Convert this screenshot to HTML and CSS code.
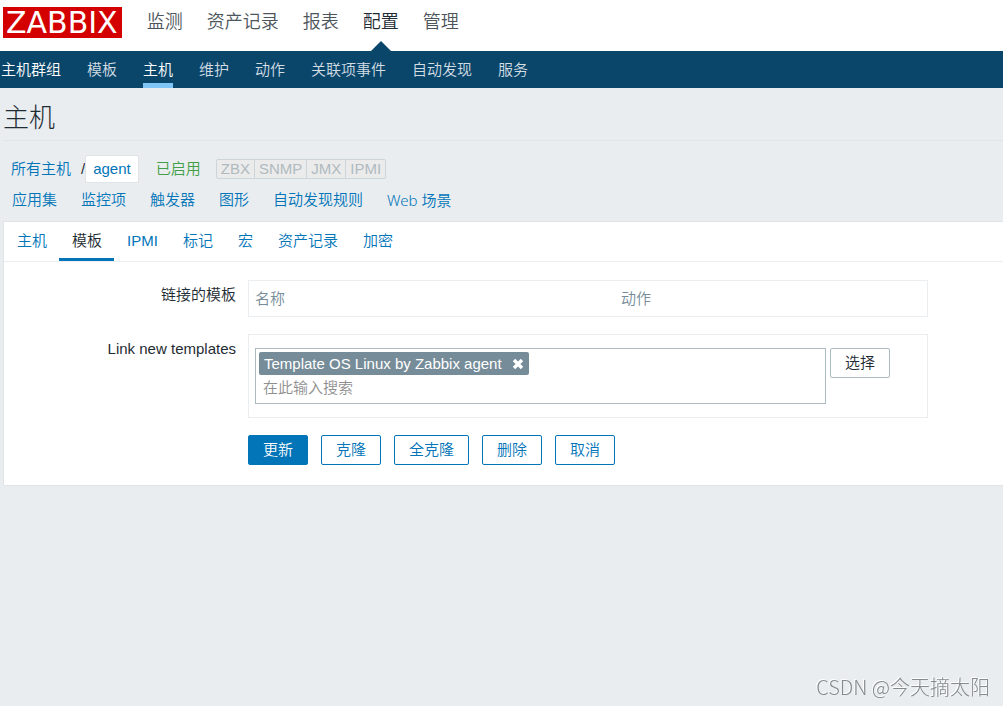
FILE: index.html
```html
<!DOCTYPE html>
<html lang="zh-CN">
<head>
<meta charset="utf-8">
<meta name="viewport" content="width=device-width, initial-scale=1">
<title>主机</title>
<link rel="stylesheet" href="styles.css">
</head>
<body>
<header>
  <div class="top-bar">
    <a class="logo" href="#">ZABBIX</a>
    <nav class="top-nav">
      <a href="#">监测</a>
      <a href="#">资产记录</a>
      <a href="#">报表</a>
      <a href="#" class="selected">配置</a>
      <a href="#">管理</a>
    </nav>
  </div>
  <nav class="sub-nav">
    <a href="#" class="bright">主机群组</a>
    <a href="#">模板</a>
    <a href="#" class="selected">主机</a>
    <a href="#">维护</a>
    <a href="#">动作</a>
    <a href="#">关联项事件</a>
    <a href="#">自动发现</a>
    <a href="#">服务</a>
  </nav>
</header>
<main>
  <h1>主机</h1>
  <div class="object-nav">
    <div class="crumbs">
      <a href="#">所有主机</a>
      <span class="slash">/</span>
      <a href="#" class="current">agent</a>
      <span class="enabled">已启用</span>
      <span class="interfaces"><span>ZBX</span><span>SNMP</span><span>JMX</span><span>IPMI</span></span>
    </div>
    <div class="object-links">
      <a href="#">应用集</a>
      <a href="#">监控项</a>
      <a href="#">触发器</a>
      <a href="#">图形</a>
      <a href="#">自动发现规则</a>
      <a href="#" class="web">Web 场景</a>
    </div>
  </div>
  <form class="panel">
    <nav class="tabs">
      <a href="#">主机</a>
      <a href="#" class="active">模板</a>
      <a href="#">IPMI</a>
      <a href="#">标记</a>
      <a href="#">宏</a>
      <a href="#">资产记录</a>
      <a href="#">加密</a>
    </nav>
    <div class="form-grid">
      <span class="label" id="linked-label">链接的模板</span>
      <div class="box">
        <table class="linked" aria-labelledby="linked-label">
          <thead><tr><th>名称</th><th>动作</th></tr></thead>
        </table>
      </div>
      <label class="label" for="template-search">Link new templates</label>
      <div class="box picker">
        <div class="multiselect">
          <span class="tag">Template OS Linux by Zabbix agent
            <button type="button" class="remove" aria-label="Remove">
              <svg width="12" height="12" viewBox="0 0 12 12"><path d="M2 2l8 8M10 2l-8 8" stroke="#fff" stroke-width="3.4" fill="none"/></svg>
            </button>
          </span>
          <input id="template-search" type="text" placeholder="在此输入搜索">
        </div>
        <button type="button" class="btn grey">选择</button>
      </div>
      <div class="actions">
        <button type="button" class="btn primary">更新</button>
        <button type="button" class="btn">克隆</button>
        <button type="button" class="btn">全克隆</button>
        <button type="button" class="btn">删除</button>
        <button type="button" class="btn">取消</button>
      </div>
    </div>
  </form>
</main>
<div class="watermark">CSDN @今天摘太阳</div>
</body>
</html>
```
FILE: styles.css
```css
* { box-sizing: border-box; }
body {
  margin: 0;
  min-height: 100vh;
  background: #e9edf0;
  color: #1f2c33;
  font: 350 15px/20px "Liberation Sans", "Noto Sans CJK SC", sans-serif;
  overflow-x: hidden;
}
a { color: #0275b8; text-decoration: none; white-space: nowrap; }
button, input { font: inherit; }

.top-bar {
  display: flex;
  align-items: flex-start;
  gap: 25px;
  height: 51px;
  padding: 7px 3px 0;
  background: #fff;
}
.logo {
  padding: 0 4px 0 3px;
  background: #d40000;
  color: #fff;
  font: 400 30px/31px "DejaVu Sans", sans-serif;
}
.top-nav { display: flex; gap: 24px; align-self: stretch; }
.top-nav a { color: #4c555b; font-size: 18px; line-height: 30px; }
.top-nav .selected {
  display: flex;
  flex-direction: column;
  align-items: center;
  justify-content: space-between;
  color: #1f2c33;
}
.top-nav .selected::after {
  content: "";
  border: 10px solid transparent;
  border-top: 0;
  border-bottom-color: #0a466a;
}
.sub-nav {
  display: flex;
  gap: 26px;
  padding: 0 1px;
  background: #0a466a;
}
.sub-nav a {
  padding: 9px 0 3px;
  border-bottom: 5px solid transparent;
  color: #d2dde4;
}
.sub-nav .bright { color: #fff; }
.sub-nav .selected { color: #fff; border-bottom-color: #7fc6f7; }

main { padding-left: 3px; }
h1 {
  margin: 0;
  padding: 12px 0 4px;
  border-bottom: 1px solid #dfe4e7;
  font-size: 26px;
  font-weight: 300;
  line-height: 36px;
}
.object-nav { padding: 14px 8px 11px; }
.crumbs { display: flex; align-items: center; }
.slash { margin-left: 10px; }
.current {
  padding: 3px 7px;
  border: 1px solid #dfe4e7;
  border-radius: 2px;
  background: #fff;
  line-height: 20px;
}
.enabled { margin-left: 17px; color: #429e47; }
.interfaces {
  display: flex;
  margin-left: 15px;
  border: 1px solid #ccd5d9;
  border-radius: 2px;
  background: #ebebeb;
  color: #afbabf;
  line-height: 18px;
}
.interfaces span { padding: 0 4px; }
.interfaces span + span { border-left: 1px solid #ccd5d9; }
.object-links { display: flex; gap: 24px; height: 27px; padding: 7px 0 0 1px; }
.web { font-family: "Noto Sans", "Noto Sans CJK SC", sans-serif; }

.panel {
  border: 1px solid #dfe4e7;
  border-right: 0;
  background: #fff;
}
.tabs { display: flex; border-bottom: 1px solid #ebeef0; }
.tabs a { padding: 9px 12px 7px 13px; border-bottom: 3px solid transparent; }
.tabs .active { color: #1f2c33; border-bottom-color: #0275b8; }
.form-grid {
  display: grid;
  grid-template-columns: 232px minmax(0, 680px);
  column-gap: 12px;
  row-gap: 17px;
  padding: 18px 0 20px;
}
.label { padding-top: 5px; text-align: right; }
.box { border: 1px solid #ebeef0; }
.linked { width: 100%; border-collapse: collapse; table-layout: fixed; }
.linked th {
  width: 54%;
  padding: 8px 0 7px 6px;
  color: #768d99;
  font-weight: 350;
  text-align: left;
}
.linked th + th { width: 46%; }
.picker { display: flex; align-items: flex-start; gap: 4px; padding: 13px 6px; }
.multiselect {
  flex: 0 1 571px;
  display: flex;
  flex-direction: column;
  align-items: flex-start;
  padding: 3px;
  border: 1px solid #acbbc2;
}
.tag {
  display: flex;
  align-items: center;
  gap: 10px;
  padding: 0 5px;
  border-radius: 2px;
  background: #768d99;
  color: #fff;
  line-height: 23px;
}
.remove { display: flex; padding: 0; border: 0; background: none; cursor: pointer; }
#template-search {
  width: 100%;
  height: 25px;
  padding: 0 4px;
  border: 0;
  outline: 0;
  background: none;
}
#template-search::placeholder { color: #8f8f8f; }
.actions { grid-column: 2; display: flex; flex-wrap: wrap; gap: 13px; }
.btn {
  padding: 4px 14px;
  border: 1px solid #0275b8;
  border-radius: 2px;
  background: #fff;
  color: #0275b8;
  cursor: pointer;
}
.primary { background: #0275b8; color: #fff; }
.grey { border-color: #acbbc2; color: #1f2c33; }
.watermark {
  position: fixed;
  right: 13px;
  bottom: 7px;
  color: #858a8e;
  font: 300 20px/24px "Noto Sans CJK SC", sans-serif;
  text-shadow: -1px -1px 0 #fff;
}
```
